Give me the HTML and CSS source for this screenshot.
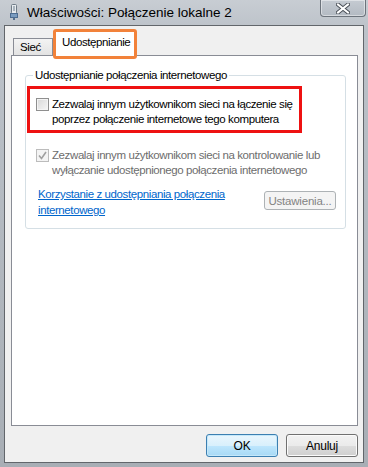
FILE: index.html
```html
<!DOCTYPE html>
<html lang="pl">

<head>
  <meta charset="UTF-8">
  <title>Właściwości: Połączenie lokalne 2</title>
  <link rel="stylesheet" href="styles.css">
</head>

<body>
  <div class="window">
    <div class="titlebar">
      <svg class="titlebar__icon" width="10" height="16" viewBox="0 0 10 16">
        <rect x="2.5" y="0.5" width="5" height="9" rx="1" fill="#e8ecef" stroke="#6f7c88"></rect>
        <rect x="4" y="2" width="2" height="5" fill="#a9b4be"></rect>
        <rect x="1.5" y="9.5" width="7" height="4" fill="#7a9cc0" stroke="#4d6d91"></rect>
        <rect x="4" y="13.5" width="2" height="2.5" fill="#55708f"></rect>
      </svg>
      <span class="titlebar__text">Właściwości: Połączenie lokalne 2</span>
      <div class="titlebar__close">
        <svg width="14" height="11" viewBox="0 0 14 11">
          <path d="M2 1.5 L12 9.5 M12 1.5 L2 9.5" stroke="#4a5058" stroke-width="4" stroke-linecap="square"></path>
          <path d="M2 1.5 L12 9.5 M12 1.5 L2 9.5" stroke="#ffffff" stroke-width="2" stroke-linecap="square"></path>
        </svg>
      </div>
    </div>

    <div class="client">
      <div class="tabs">
        <div class="tab">Sieć</div>
        <div class="tab tab--active">Udostępnianie</div>
      </div>

      <div class="panel">
        <fieldset class="group">
          <legend class="group__title">Udostępnianie połączenia internetowego</legend>

          <div class="highlight">
            <label class="option">
              <span class="checkbox"></span>
              <span class="option__text">Zezwalaj innym użytkownikom sieci na łączenie się<br>poprzez połączenie internetowe tego komputera</span>
            </label>
          </div>

          <label class="option option--disabled">
            <span class="checkbox checkbox--checked">
              <svg width="9" height="9" viewBox="0 0 9 9">
                <path d="M1 4.5 L3.5 7.5 L8 1" stroke="#a0a0a0" stroke-width="1.6" fill="none"></path>
              </svg>
            </span>
            <span class="option__text">Zezwalaj innym użytkownikom sieci na kontrolowanie lub<br>wyłączanie udostępnionego połączenia internetowego</span>
          </label>

          <div class="group__footer">
            <a class="link" href="#">Korzystanie z udostępniania połączenia<br>internetowego</a>
            <button class="btn btn--disabled" disabled>Ustawienia...</button>
          </div>
        </fieldset>
      </div>

      <div class="footer">
        <button class="btn btn--default">OK</button>
        <button class="btn">Anuluj</button>
      </div>
    </div>
  </div>
</body>

</html>
```

FILE: styles.css
```css
body {
  margin: 0;
  font-family: "Liberation Sans Narrow", "Liberation Sans", Arial, sans-serif;
  font-size: 11.5px;
  letter-spacing: -0.4px;
  color: #000;
  background: #a9afb6;
  white-space: nowrap;
}

.window {
  width: 368px;
  height: 467px;
  box-sizing: border-box;
  padding: 0 4px 4px;
  background: linear-gradient(to bottom, #c8cdd3 0px, #bcc2c9 30px, #a8aeb5 100%);
}

.titlebar {
  height: 25px;
  display: flex;
  align-items: flex-start;
  position: relative;
}

.titlebar__icon {
  margin: 4px 0 0 5px;
}

.titlebar__text {
  margin: 5px 0 0 8px;
  font-family: "Liberation Sans", Arial, sans-serif;
  font-size: 13.5px;
  letter-spacing: 0;
}

.titlebar__close {
  position: absolute;
  right: -2px;
  top: 0;
  width: 44px;
  height: 16px;
  border: 1px solid #6c737b;
  border-top: none;
  border-radius: 0 0 4px 4px;
  background: linear-gradient(to bottom, #c5cbd2, #b3bac2);
  box-shadow: inset 0 0 0 1px rgba(255, 255, 255, 0.45);
  display: flex;
  align-items: center;
  justify-content: center;
}

.client {
  height: 438px;
  box-sizing: border-box;
  border: 1px solid #62666b;
  background: #f0f0f0;
  padding: 3px 5px 0 6px;
}

.tabs {
  height: 26px;
  display: flex;
  align-items: flex-end;
  padding-left: 2px;
}

.tab {
  width: 40px;
  height: 17px;
  box-sizing: border-box;
  border: 1px solid #898c95;
  border-bottom: none;
  background: linear-gradient(to bottom, #f3f3f3, #e3e3e3);
  padding: 2px 0 0 6px;
}

.tab--active {
  position: relative;
  z-index: 1;
  width: 84px;
  height: 30px;
  margin-bottom: -4px;
  border: 3px solid #f2823a;
  border-radius: 3px;
  background: #fff;
  padding: 4px 0 0 6px;
}

.panel {
  height: 371px;
  box-sizing: border-box;
  border: 1px solid #898c95;
  background: #fff;
  padding: 12px 11px 0 13px;
}

.group {
  margin: 0;
  padding: 4px 0 10px 1px;
  border: 1px solid #d5dfe5;
  border-radius: 3px;
  min-width: 0;
}

.group__title {
  padding: 0 2px;
  margin-left: 6px;
  line-height: 14px;
}

.highlight {
  width: 275px;
  box-sizing: border-box;
  border: 3px solid #ee1111;
  padding: 8px 0 3px 6px;
}

.option {
  display: flex;
  align-items: flex-start;
  line-height: 15px;
}

.option--disabled {
  color: #6d6d6d;
  margin: 15px 0 0 9px;
}

.checkbox {
  flex: none;
  width: 13px;
  height: 13px;
  box-sizing: border-box;
  margin: 1px 3px 0 0;
  border: 1px solid #8f8f8f;
  background: linear-gradient(135deg, #d8d8d8, #f6f6f6);
  box-shadow: inset 0 0 0 1px #f4f4f4;
  display: flex;
  align-items: center;
  justify-content: center;
}

.checkbox--checked {
  border-color: #bcbcbc;
  background: #f4f4f4;
}

.group__footer {
  display: flex;
  justify-content: space-between;
  align-items: flex-start;
  margin: 8px 9px 0 11px;
}

.link {
  color: #0066cc;
  line-height: 16px;
}

.btn {
  font-family: inherit;
  font-size: 12px;
  letter-spacing: -0.2px;
  color: #000;
  height: 23px;
  padding: 0;
  border: 1px solid #707070;
  border-radius: 3px;
  background: linear-gradient(to bottom, #f2f2f2 0%, #ebebeb 50%, #dddddd 51%, #cfcfcf 100%);
  box-shadow: inset 0 0 0 1px #fbfbfb;
}

.btn--disabled {
  width: 72px;
  height: 19px;
  margin-top: 5px;
  font-size: 11.5px;
  color: #838383;
  border-color: #adb2b5;
  background: #f4f4f4;
  box-shadow: none;
}

.footer {
  display: flex;
  justify-content: flex-end;
  gap: 8px;
  margin-top: 8px;
}

.footer .btn {
  width: 72px;
}

.btn--default {
  border-color: #3c7fb1;
  background: linear-gradient(to bottom, #eaf6fd 0%, #d9f0fc 50%, #bee6fd 51%, #a7d9f5 100%);
  box-shadow: inset 0 0 0 1px #c5e8fa;
}
```
